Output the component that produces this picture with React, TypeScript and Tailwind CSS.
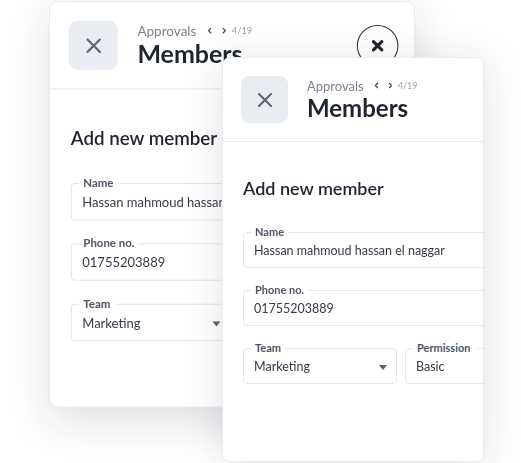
import React from "react";
import { ChevronLeft, ChevronRight } from "lucide-react";

const head = { fontFamily: "Lato, 'Open Sans', sans-serif" };

const Field = ({
  label,
  value,
  select = false,
  className = "",
}: {
  label: string;
  value: string;
  select?: boolean;
  className?: string;
}) => (
  <div
    className={`relative h-9 rounded-[4px] border border-[#e3e7ed] flex items-center pl-[10px] pr-[9px] pt-[3px] ${className}`}
  >
    <span
      style={head}
      className="absolute -top-[8px] left-[7px] bg-white px-[4px] text-[11px] font-bold leading-[14px] text-[#4f5563]"
    >
      {label}
    </span>
    <span style={head} className="text-[12.5px] text-[#353b48] whitespace-nowrap">
      {value}
    </span>
    {select && (
      <svg className="ml-auto" width="8" height="5" viewBox="0 0 8 5">
        <path d="M0 0h8L4 5z" fill="#5b6170" />
      </svg>
    )}
  </div>
);

// the back card is mostly covered, so its permission field is never seen
const CardContent = ({ behind = false }: { behind?: boolean }) => (
  <div className="w-[356px]">
    <div className="h-[84px] border-b border-[#e6ebf1] flex items-center pl-[18px] pr-[21px]">
      <div className="w-[47px] h-[47px] rounded-[8px] bg-[#e9ecf1] flex items-center justify-center">
        <svg width="16" height="16" viewBox="0 0 16 16">
          <path d="M2 2l12 12M14 2L2 14" stroke="#5b6170" strokeWidth="2" strokeLinecap="round" />
        </svg>
      </div>
      <div className="ml-[19px] flex flex-col" style={head}>
        <div className="flex items-center text-[13px] leading-[16px] text-[#7c8290]">
          <span>Approvals</span>
          <ChevronLeft className="ml-[8px]" size={9} strokeWidth={3} color="#3f4452" />
          <ChevronRight className="ml-[5px]" size={9} strokeWidth={3} color="#3f4452" />
          <span className="ml-[3px] text-[9px] text-[#9aa0ab]">4/19</span>
        </div>
        <div className="text-[24px] font-bold leading-[28px] text-[#1f2430]">Members</div>
      </div>
      <div className="ml-auto w-10 h-10 rounded-full border-[1.5px] border-[#2a2e38] flex items-center justify-center">
        <svg width="12" height="12" viewBox="0 0 12 12">
          <path d="M2 2l8 8M10 2L2 10" stroke="#1f2430" strokeWidth="3" strokeLinecap="round" />
        </svg>
      </div>
    </div>
    <div className="px-5 pt-[35px]">
      <h2 style={head} className="text-[18px] font-semibold leading-[22px] text-[#1f2430]">
        Add new member
      </h2>
      <div className="mt-[33px] flex flex-col gap-[22px]">
        <Field label="Name" value="Hassan mahmoud hassan el naggar" />
        <Field label="Phone no." value="01755203889" />
        <div className="grid grid-cols-2 gap-2">
          <Field label="Team" value="Marketing" select />
          <Field
            label="Permission"
            value="Basic"
            select
            className={behind ? "invisible" : ""}
          />
        </div>
      </div>
    </div>
  </div>
);

export default function App() {
  return (
    <div className="relative w-[521px] h-[463px] bg-white overflow-hidden">
      <div className="absolute left-[49px] top-[1px] w-[352px] h-[391px] origin-top-left scale-[1.04] rounded-[8px] border border-[#e8ecf1] bg-white overflow-hidden shadow-[0_12px_40px_rgba(20,30,50,0.14)]">
        <CardContent behind />
      </div>
      <div className="absolute left-[222px] top-[57px] w-[262px] h-[405px] rounded-[8px] border border-[#e8ecf1] bg-white overflow-hidden shadow-[0_4px_40px_rgba(20,30,50,0.13)]">
        <CardContent />
      </div>
    </div>
  );
}
